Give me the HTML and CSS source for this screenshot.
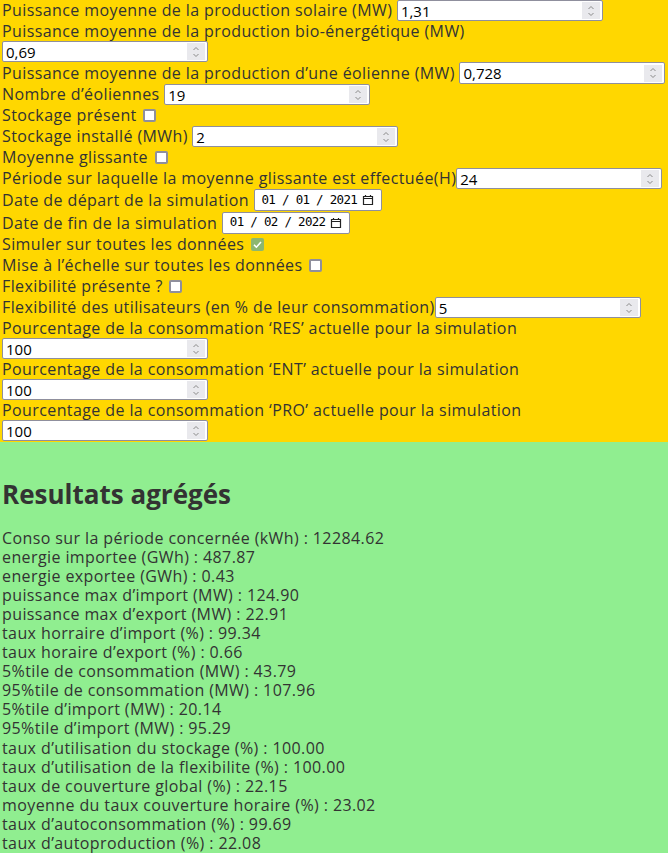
FILE: index.html
```html
<!DOCTYPE html>
<html lang="fr">
<head>
<meta charset="utf-8">
<title>Simulation</title>
<link rel="stylesheet" href="styles.css">
</head>
<body>
<div class="config">
  <div class="row row-input">Puissance moyenne de la production solaire (MW) <span class="num"><input class="field" value="1,31"><span class="spin"><svg viewBox="0 0 10 14" width="10" height="14"><path d="M2.5 5 L5 2.5 L7.5 5 M2.5 9 L5 11.5 L7.5 9" fill="none" stroke="#8a8a8a" stroke-width="1"/></svg></span></span></div>
  <div class="row">Puissance moyenne de la production bio-énergétique (MW) <span class="num"><input class="field" value="0,69"><span class="spin"><svg viewBox="0 0 10 14" width="10" height="14"><path d="M2.5 5 L5 2.5 L7.5 5 M2.5 9 L5 11.5 L7.5 9" fill="none" stroke="#8a8a8a" stroke-width="1"/></svg></span></span></div>
  <div class="row row-input row-tall">Puissance moyenne de la production d’une éolienne (MW) <span class="num"><input class="field" value="0,728"><span class="spin"><svg viewBox="0 0 10 14" width="10" height="14"><path d="M2.5 5 L5 2.5 L7.5 5 M2.5 9 L5 11.5 L7.5 9" fill="none" stroke="#8a8a8a" stroke-width="1"/></svg></span></span></div>
  <div class="row row-input">Nombre d’éoliennes <span class="num"><input class="field" value="19"><span class="spin"><svg viewBox="0 0 10 14" width="10" height="14"><path d="M2.5 5 L5 2.5 L7.5 5 M2.5 9 L5 11.5 L7.5 9" fill="none" stroke="#8a8a8a" stroke-width="1"/></svg></span></span></div>
  <div class="row row-check">Stockage présent <span class="check"></span></div>
  <div class="row row-input">Stockage installé (MWh) <span class="num"><input class="field" value="2"><span class="spin"><svg viewBox="0 0 10 14" width="10" height="14"><path d="M2.5 5 L5 2.5 L7.5 5 M2.5 9 L5 11.5 L7.5 9" fill="none" stroke="#8a8a8a" stroke-width="1"/></svg></span></span></div>
  <div class="row row-check">Moyenne glissante <span class="check"></span></div>
  <div class="row row-input">Période sur laquelle la moyenne glissante est effectuée(H)<span class="num"><input class="field" value="24"><span class="spin"><svg viewBox="0 0 10 14" width="10" height="14"><path d="M2.5 5 L5 2.5 L7.5 5 M2.5 9 L5 11.5 L7.5 9" fill="none" stroke="#8a8a8a" stroke-width="1"/></svg></span></span></div>
  <div class="row row-date">Date de départ de la simulation <span class="date"><span class="date-text">01 / 01 / 2021</span><svg class="cal" viewBox="0 0 12 12" width="12" height="12"><path d="M1.5 2.5 H10.5 V10.5 H1.5 Z M1.5 4.5 H10.5" fill="none" stroke="#222" stroke-width="1.2"/><path d="M3.5 1 V3 M8.5 1 V3" stroke="#222" stroke-width="1.2"/></svg></span></div>
  <div class="row row-date">Date de fin de la simulation <span class="date"><span class="date-text">01 / 02 / 2022</span><svg class="cal" viewBox="0 0 12 12" width="12" height="12"><path d="M1.5 2.5 H10.5 V10.5 H1.5 Z M1.5 4.5 H10.5" fill="none" stroke="#222" stroke-width="1.2"/><path d="M3.5 1 V3 M8.5 1 V3" stroke="#222" stroke-width="1.2"/></svg></span></div>
  <div class="row row-check">Simuler sur toutes les données <span class="check checked"><svg viewBox="0 0 13 13" width="13" height="13"><path d="M3 6.8 L5.4 9.2 L10 4" fill="none" stroke="#fff" stroke-width="1.6"/></svg></span></div>
  <div class="row row-check">Mise à l’échelle sur toutes les données <span class="check"></span></div>
  <div class="row row-check">Flexibilité présente ? <span class="check"></span></div>
  <div class="row row-input">Flexibilité des utilisateurs (en % de leur consommation)<span class="num"><input class="field" value="5"><span class="spin"><svg viewBox="0 0 10 14" width="10" height="14"><path d="M2.5 5 L5 2.5 L7.5 5 M2.5 9 L5 11.5 L7.5 9" fill="none" stroke="#8a8a8a" stroke-width="1"/></svg></span></span></div>
  <div class="row">Pourcentage de la consommation ‘RES’ actuelle pour la simulation <span class="num"><input class="field" value="100"><span class="spin"><svg viewBox="0 0 10 14" width="10" height="14"><path d="M2.5 5 L5 2.5 L7.5 5 M2.5 9 L5 11.5 L7.5 9" fill="none" stroke="#8a8a8a" stroke-width="1"/></svg></span></span></div>
  <div class="row">Pourcentage de la consommation ‘ENT’ actuelle pour la simulation <span class="num"><input class="field" value="100"><span class="spin"><svg viewBox="0 0 10 14" width="10" height="14"><path d="M2.5 5 L5 2.5 L7.5 5 M2.5 9 L5 11.5 L7.5 9" fill="none" stroke="#8a8a8a" stroke-width="1"/></svg></span></span></div>
  <div class="row">Pourcentage de la consommation ‘PRO’ actuelle pour la simulation <span class="num"><input class="field" value="100"><span class="spin"><svg viewBox="0 0 10 14" width="10" height="14"><path d="M2.5 5 L5 2.5 L7.5 5 M2.5 9 L5 11.5 L7.5 9" fill="none" stroke="#8a8a8a" stroke-width="1"/></svg></span></span></div>
</div>
<div class="results">
  <h2 class="title">Resultats agrégés</h2>
  <div class="lines">
    <div>Conso sur la période concernée (kWh) : 12284.62</div>
    <div>energie importee (GWh) : 487.87</div>
    <div>energie exportee (GWh) : 0.43</div>
    <div>puissance max d’import (MW) : 124.90</div>
    <div>puissance max d’export (MW) : 22.91</div>
    <div>taux horraire d’import (%) : 99.34</div>
    <div>taux horaire d’export (%) : 0.66</div>
    <div>5%tile de consommation (MW) : 43.79</div>
    <div>95%tile de consommation (MW) : 107.96</div>
    <div>5%tile d’import (MW) : 20.14</div>
    <div>95%tile d’import (MW) : 95.29</div>
    <div>taux d’utilisation du stockage (%) : 100.00</div>
    <div>taux d’utilisation de la flexibilite (%) : 100.00</div>
    <div>taux de couverture global (%) : 22.15</div>
    <div>moyenne du taux couverture horaire (%) : 23.02</div>
    <div>taux d’autoconsommation (%) : 99.69</div>
    <div>taux d’autoproduction (%) : 22.08</div>
  </div>
</div>
</body>
</html>
```
FILE: styles.css
```css
html, body {
  margin: 0;
  padding: 0;
}
body {
  font-family: "Open Sans", "Noto Sans", sans-serif;
  font-size: 16px;
  letter-spacing: 0.4px;
  color: #333333;
  background: #90ee90;
}
.config {
  background: #ffd700;
  padding: 0 0 1px 2px;
}
.row {
  line-height: 20px;
}
.row-input,
.row-check {
  line-height: 21px;
}
.row-tall {
  line-height: 22px;
}
.row-date {
  line-height: 22.5px;
}
.num {
  display: inline-flex;
  align-items: center;
  width: 206px;
  height: 21px;
  box-sizing: border-box;
  border: 1px solid #8f8f9d;
  border-radius: 2px;
  background: #fff;
  vertical-align: top;
  padding: 0 2px 0 3px;
}
.row-tall .num {
  height: 22px;
}
.field {
  flex: 1;
  min-width: 0;
  border: none;
  outline: none;
  padding: 0;
  margin: 0;
  font-family: "Open Sans", sans-serif;
  font-size: 15px;
  letter-spacing: 0;
  color: #000;
  background: transparent;
  height: 18px;
}
.spin {
  display: flex;
  align-items: center;
  justify-content: center;
  width: 18px;
  height: 17px;
  background: #e9e9ed;
}
.check {
  display: inline-flex;
  width: 13px;
  height: 13px;
  box-sizing: border-box;
  border: 2px solid #8f8f9d;
  border-radius: 2px;
  background: #fff;
  vertical-align: -1px;
  margin-left: 2px;
}
.check.checked {
  border: none;
  background: #8db76f;
}
.date {
  display: inline-flex;
  align-items: center;
  height: 22px;
  box-sizing: border-box;
  border: 1px solid #8f8f9d;
  border-radius: 2px;
  background: #fff;
  vertical-align: top;
  padding: 0 7px 0 7px;
  gap: 5px;
}
.date-text {
  font-family: "DejaVu Sans Mono", monospace;
  font-size: 12.5px;
  letter-spacing: -0.7px;
  color: #000;
}
.results {
  padding: 0 2px 0 2px;
}
.title {
  margin: 0;
  padding: 37px 0 20px 0;
  font-size: 26px;
  line-height: 30px;
  letter-spacing: 0;
  font-weight: bold;
}
.lines {
  line-height: 19.05px;
}
```
